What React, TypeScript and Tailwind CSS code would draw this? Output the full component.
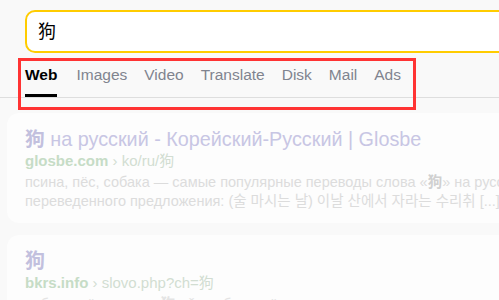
export default function App() {
  const tabs = ["Images", "Video", "Translate", "Disk", "Mail", "Ads"]

  return (
    <div className="relative w-[499px] h-[300px] overflow-hidden bg-[#f9f9f9] font-['Liberation_Sans','Noto_Sans_CJK_SC','Noto_Sans_CJK_KR',sans-serif]">
      {/* search box */}
      <div className="pt-[10px] pl-[25px]">
        <div className="flex items-center w-[520px] h-[43px] pl-[11px] rounded-[10px] border-2 border-[#ffcc00] bg-white">
          <span className="text-[18px] leading-none text-black">狗</span>
        </div>
      </div>

      {/* tabs */}
      <div className="flex gap-[17px] pl-[25px] border-b border-[#dedede]">
        <div className="flex flex-col pt-[13px] mr-[2px]">
          <span className="text-[15.5px] leading-[17px] font-bold text-black">Web</span>
          <div className="mt-[11px] h-[3px] bg-black" />
        </div>
        {tabs.map(t => (
          <div key={t} className="flex flex-col pt-[13px]">
            <span className="text-[15.5px] leading-[17px] text-[#80848f]">{t}</span>
            <div className="mt-[11px] h-[3px]" />
          </div>
        ))}
      </div>

      {/* annotation box */}
      <div className="absolute left-[18px] top-[58px] w-[398px] h-[52px] border-[3px] border-[#ff3333]" />

      {/* results (faded) */}
      <div className="pl-[7px] pt-[15px] flex flex-col gap-[12px]">
        <div className="w-[540px] rounded-[12px] bg-[#fdfdfd] pl-[18px] pt-[14px] pb-[12px]">
          <div className="text-[19.8px] leading-[24px] text-[#c8c6e4] whitespace-nowrap">
            <span className="font-bold text-[#c2c0de]">狗</span> на русский - Корейский-Русский | Glosbe
          </div>
          <div className="text-[15px] leading-[20px] whitespace-nowrap">
            <span className="font-bold text-[#c6dcc6]">glosbe.com</span>
            <span className="text-[#d2ddd2]"> › ko/ru/狗</span>
          </div>
          <div className="mt-[2px] text-[14.5px] leading-[19px] text-[#dcdcdc] whitespace-nowrap">
            <div>псина, пёс, собака — самые популярные переводы слова «<span className="font-bold text-[#d0d0d0]">狗</span>» на русский язык. Пример</div>
            <div>переведенного предложения: (술 마시는 날) 이날 산에서 자라는 수리취 [...]</div>
          </div>
        </div>

        <div className="w-[540px] rounded-[12px] bg-[#fdfdfd] pl-[18px] pt-[14px] pb-[12px]">
          <div className="text-[20px] leading-[24px] font-bold text-[#c2c0de]">狗</div>
          <div className="text-[15px] leading-[20px] whitespace-nowrap">
            <span className="font-bold text-[#c6dcc6]">bkrs.info</span>
            <span className="text-[#d2ddd2]"> › slovo.php?ch=狗</span>
          </div>
          <div className="mt-[2px] text-[14.5px] leading-[19px] text-[#e4e4e4] whitespace-nowrap">
            собака; пёс; щенок; <span className="font-bold">狗</span> gǒu собака; пёс
          </div>
        </div>
      </div>
    </div>
  )
}
